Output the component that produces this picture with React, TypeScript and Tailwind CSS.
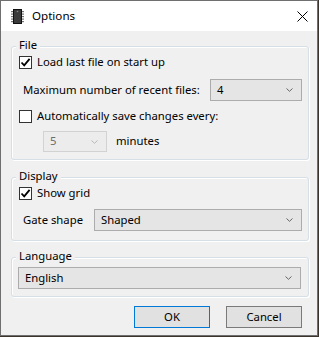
import type { ReactNode } from "react";

const font = { fontFamily: '"Noto Sans", "Open Sans", sans-serif' };

function Check({ checked }: { checked?: boolean }) {
  return (
    <span className="flex h-[13px] w-[13px] shrink-0 items-center justify-center border border-[#333] bg-white">
      {checked ? (
        <svg width="11" height="11" viewBox="0 0 11 11" aria-hidden="true">
          <path d="M1.5 5.5 L4.2 8.3 L9.6 1.8" fill="none" stroke="#000" strokeWidth="1.8" />
        </svg>
      ) : null}
    </span>
  );
}

function Chevron({ light }: { light?: boolean }) {
  return (
    <svg width="7" height="4" viewBox="0 0 7 4" aria-hidden="true" className="ml-auto mr-[8px]">
      <path d="M0.5 0.5 L3.5 3.3 L6.5 0.5" fill="none" stroke={light ? "#b8b8b8" : "#666"} strokeWidth="1" />
    </svg>
  );
}

function Combo({ value, className, disabled }: { value: string; className: string; disabled?: boolean }) {
  return (
    <div
      className={
        "flex items-center border pl-[6px] " +
        (disabled
          ? "border-[#d2d2d2] bg-[#ececec] text-[#6d6d6d] "
          : "border-[#acacac] bg-[#e5e5e5] text-black ") +
        className
      }
    >
      <span>{value}</span>
      <Chevron light={disabled} />
    </div>
  );
}

function Group({ label, className, children }: { label: string; className: string; children: ReactNode }) {
  return (
    <div
      className={
        "relative ml-[10px] w-[298px] rounded-[3px] border border-[#d5dfe5] shadow-[inset_1px_1px_0_#fff,1px_1px_0_#fff] " +
        className
      }
    >
      <span className="absolute left-[4px] top-[-10px] bg-[#f0f0f0] px-[3px] leading-[16px]">{label}</span>
      {children}
    </div>
  );
}

function ChipIcon() {
  return (
    <svg width="13" height="15" viewBox="0 0 13 15" aria-hidden="true">
      <rect x="2.5" y="0.5" width="8" height="14" fill="#3a3a3a" stroke="#111" />
      {[2, 4.5, 7, 9.5, 12].map((y) => (
        <g key={y}>
          <rect x="0" y={y} width="2" height="1.2" fill="#777" />
          <rect x="11" y={y} width="2" height="1.2" fill="#777" />
        </g>
      ))}
      <circle cx="6.5" cy="2.5" r="0.8" fill="#888" />
    </svg>
  );
}

export default function App() {
  return (
    <div className="h-[337px] w-[319px] whitespace-nowrap bg-[#3b342c] text-[11.3px] text-black" style={font}>
      <div className="flex h-[336px] w-[318px] flex-col border border-[#6f6f6f] bg-white">
        <header className="flex h-[30px] shrink-0 items-center">
          <span className="ml-[10px] mt-[1px]">
            <ChipIcon />
          </span>
          <span className="ml-[8px] text-[11.6px]">Options</span>
          <svg width="11" height="11" viewBox="0 0 11 11" aria-hidden="true" className="ml-auto mr-[9px] mt-[1px]">
            <path d="M0.5 0.5 L10.5 10.5 M10.5 0.5 L0.5 10.5" stroke="#000" strokeWidth="1" />
          </svg>
        </header>

        <main className="flex flex-1 flex-col bg-[#f0f0f0]">
          <Group label="File" className="mt-[15px] h-[114px]">
            <label className="ml-[7px] mt-[9px] flex h-[13px] items-center gap-[5px]">
              <Check checked />
              <span>Load last file on start up</span>
            </label>
            <div className="mt-[10px] flex h-[22px] items-center">
              <span className="ml-[11px]">Maximum number of recent files:</span>
              <Combo value="4" className="ml-auto mr-[6px] h-[22px] w-[92px]" />
            </div>
            <label className="ml-[7px] mt-[9px] flex h-[13px] items-center gap-[5px]">
              <Check />
              <span>Automatically save changes every:</span>
            </label>
            <div className="mt-[8px] flex h-[21px] items-center">
              <Combo value="5" disabled className="ml-[31px] h-[21px] w-[64px]" />
              <span className="ml-[9px]">minutes</span>
            </div>
          </Group>

          <Group label="Display" className="mt-[17px] h-[64px]">
            <label className="ml-[7px] mt-[9px] flex h-[13px] items-center gap-[5px]">
              <Check checked />
              <span>Show grid</span>
            </label>
            <div className="mt-[9px] flex h-[22px] items-center">
              <span className="ml-[11px]">Gate shape</span>
              <Combo value="Shaped" className="ml-auto mr-[6px] h-[22px] w-[208px]" />
            </div>
          </Group>

          <Group label="Language" className="mt-[16px] h-[40px]">
            <Combo value="English" className="ml-[6px] mt-[9px] h-[22px] w-[283px]" />
          </Group>

          <div className="mt-[9px] flex gap-[16px] pl-[133px]">
            <button type="button" className="h-[22px] w-[76px] border border-[#0078d7] bg-[#e1e1e1]">
              OK
            </button>
            <button type="button" className="h-[22px] w-[76px] border border-[#7a7a7a] bg-[#e1e1e1]">
              Cancel
            </button>
          </div>
        </main>
      </div>
    </div>
  );
}
